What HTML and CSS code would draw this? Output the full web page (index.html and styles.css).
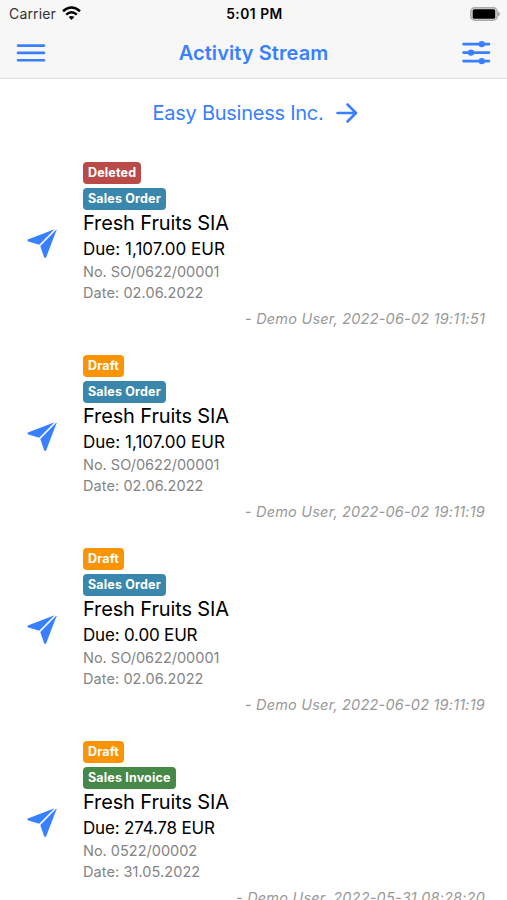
FILE: index.html
```html
<!DOCTYPE html>
<html lang="en">
<head>
<meta charset="utf-8">
<title>Activity Stream</title>
<link rel="stylesheet" href="styles.css">
</head>
<body>
<svg class="defs" width="0" height="0" aria-hidden="true">
  <symbol id="plane" viewBox="0 0 30 30">
    <path d="M.8 10.500 27.600.300 12.200 15.700 1.300 12.600Q-.2 11.600.8 10.500Z"/>
    <path d="M29.500 1.300 19.200 28.200Q18.400 29.700 17.100 28.300L13.300 16.900 28.700 1.200Q29.400.5 29.500 1.300Z"/>
  </symbol>
</svg>
<div class="screen">
  <header class="top">
    <div class="status">
      <div class="carrier"><span class="carrier-name">Carrier</span>
        <svg width="19" height="15" viewBox="0 0 19 15" fill="none" stroke="#000" stroke-width="2.500"><path d="M1 5.200Q9.500-2.300 18 5.200"/><path d="M4.200 8.600Q9.500 3.900 14.800 8.600"/><path d="M9.500 14 6.600 11.100Q9.500 8.700 12.400 11.100Z" fill="#000" stroke="none"/></svg>
      </div>
      <span class="clock">5:01 PM</span>
      <svg class="battery" width="31" height="14" viewBox="0 0 31 14"><rect x=".8" y=".8" width="26.400" height="12.400" rx="3.800" fill="#d8d8d8" stroke="#aaa" stroke-width="1.400"/><rect x="2.700" y="2.300" width="22.500" height="9.400" rx="1.500"/><path d="M28 4.500Q32.500 7 28 9.500Z" fill="#aaa"/></svg>
    </div>
    <nav class="nav">
      <svg width="30" height="20" viewBox="0 0 30 20" class="line"><path d="M2 2.600H28M2 9.900H28M2 17.200H28"/></svg>
      <h1 class="heading">Activity Stream</h1>
      <svg width="30" height="26" viewBox="0 0 30 26" class="line"><path d="M2.500 4.100H28M2.500 12.600H28M2.500 21.100H28"/><g fill="#3880ff" stroke="none"><circle cx="20.800" cy="4.100" r="3.200"/><circle cx="10" cy="12.600" r="3.200"/><circle cx="20.800" cy="21.100" r="3.200"/></g></svg>
    </nav>
  </header>
  <div class="company"><span class="company-name">Easy Business Inc.</span>
    <svg width="22" height="22" viewBox="0 0 22 22" class="line arrow"><path d="M1.500 11H20M11.500 2.500 20 11 11.500 19.500"/></svg>
  </div>
  <main class="list">
    <article class="item">
      <svg class="plane" width="30" height="30"><use href="#plane"/></svg>
      <div class="badges"><span class="badge deleted">Deleted</span><span class="badge order">Sales Order</span></div>
      <h2 class="name">Fresh Fruits SIA</h2>
      <p class="due thousands">Due: 1,107.00 EUR</p>
      <p class="meta number">No. SO/0622/00001</p>
      <p class="meta">Date: 02.06.2022</p>
      <p class="author">- Demo User, 2022-06-02 19:11:51</p>
    </article>
    <article class="item">
      <svg class="plane" width="30" height="30"><use href="#plane"/></svg>
      <div class="badges"><span class="badge draft">Draft</span><span class="badge order">Sales Order</span></div>
      <h2 class="name">Fresh Fruits SIA</h2>
      <p class="due thousands">Due: 1,107.00 EUR</p>
      <p class="meta number">No. SO/0622/00001</p>
      <p class="meta">Date: 02.06.2022</p>
      <p class="author">- Demo User, 2022-06-02 19:11:19</p>
    </article>
    <article class="item">
      <svg class="plane" width="30" height="30"><use href="#plane"/></svg>
      <div class="badges"><span class="badge draft">Draft</span><span class="badge order">Sales Order</span></div>
      <h2 class="name">Fresh Fruits SIA</h2>
      <p class="due">Due: 0.00 EUR</p>
      <p class="meta number">No. SO/0622/00001</p>
      <p class="meta">Date: 02.06.2022</p>
      <p class="author">- Demo User, 2022-06-02 19:11:19</p>
    </article>
    <article class="item">
      <svg class="plane" width="30" height="30"><use href="#plane"/></svg>
      <div class="badges"><span class="badge draft">Draft</span><span class="badge invoice">Sales Invoice</span></div>
      <h2 class="name">Fresh Fruits SIA</h2>
      <p class="due">Due: 274.78 EUR</p>
      <p class="meta number">No. 0522/00002</p>
      <p class="meta">Date: 31.05.2022</p>
      <p class="author">- Demo User, 2022-05-31 08:28:20</p>
    </article>
  </main>
</div>
</body>
</html>
```
FILE: styles.css
```css
* { box-sizing: border-box; margin: 0; padding: 0; }
body { font-family: Inter, "Liberation Sans", sans-serif; background: #fff; color: #000; overflow: hidden; }
svg { display: block; flex: none; }
.defs { position: absolute; }
.screen { height: 900px; overflow: hidden; }
.top { height: 79px; background: #f7f7f7; border-bottom: 1px solid #dedede; }
.status { height: 27px; display: grid; grid-template-columns: 1fr auto 1fr; align-items: center; padding: 0 6px 0 8px; }
.carrier { display: flex; align-items: center; gap: 6px; }
.carrier-name { font-size: 14px; color: #333; letter-spacing: .15px; padding-left: 1px; }
.clock { font-size: 13.800px; font-weight: 600; letter-spacing: .5px; }
.battery { justify-self: end; }
.nav { height: 51px; display: flex; align-items: center; justify-content: space-between; padding: 0 16px; }
.heading { font-size: 20px; font-weight: 600; color: #3880ff; letter-spacing: .07px; }
.line { fill: none; stroke: #3880ff; stroke-width: 2.600; stroke-linecap: round; stroke-linejoin: round; }
.company { height: 83px; padding: 0 0 15px 3px; display: flex; align-items: center; justify-content: center; gap: 12px; }
.company-name { font-size: 20px; color: #3880ff; letter-spacing: -.25px; }
.item { height: 193px; display: grid; grid-template-columns: 56px 1fr; grid-template-rows: 47px 27px 25px 21px 21px 31px; padding: 0 22px 0 27px; align-items: center; }
.item > * { grid-column: 2; }
.item > .plane { grid-column: 1; grid-row: 1 / 6; fill: #3880ff; margin-top: 23px; }
.badges { display: flex; flex-direction: column; align-items: flex-start; gap: 4px; height: 47px; }
.badge { flex: none; height: 22px; line-height: 21px; padding: 0 5px; border-radius: 4px; color: #fff; font-size: 12.500px; font-weight: 700; letter-spacing: .17px; }
.deleted { background: #b94a48; }
.order { background: #3a87ad; }
.draft { background: #f89406; }
.invoice { background: #468847; }
.name { font-size: 20px; font-weight: 400; letter-spacing: -.13px; }
.due { font-size: 17px; letter-spacing: -.18px; }
.thousands { letter-spacing: .02px; }
.meta { font-size: 14.500px; color: #848484; letter-spacing: .08px; }
.number { letter-spacing: 0; }
.author { font-size: 14.500px; font-style: italic; color: #999; letter-spacing: .2px; justify-self: end; }
```
